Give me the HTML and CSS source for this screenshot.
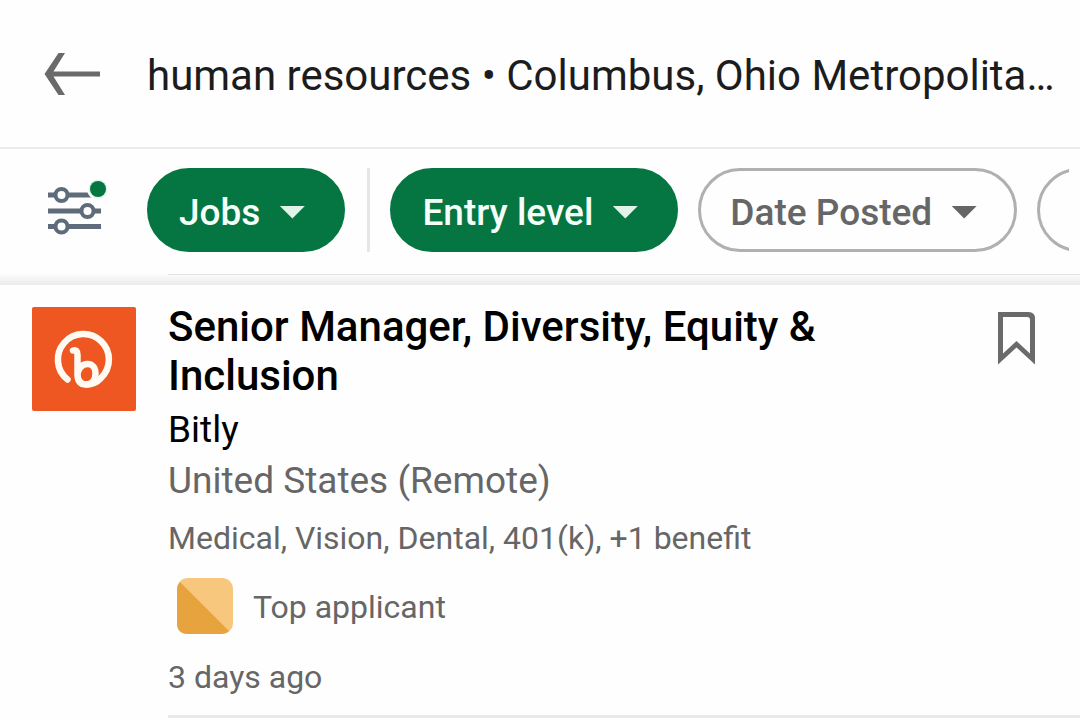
FILE: index.html
```html
<!DOCTYPE html>
<html lang="en">
<head>
<meta charset="utf-8">
<meta name="viewport" content="width=device-width, initial-scale=1">
<title>Job search</title>
<link rel="stylesheet" href="styles.css">
</head>
<body>
<header class="topbar">
  <button class="icon-button" type="button" aria-label="Back">
    <svg width="56" height="44" viewBox="0 0 56 44" fill="#6a6a6a"><path d="M14.500 1h6.500L9.500 19.500H56v5H9.500L21 43h-6.500L.5 22z"/></svg>
  </button>
  <input class="search" type="text" aria-label="Search" value="human resources • Columbus, Ohio Metropolitan Area">
</header>
<nav class="filters" aria-label="Filters">
  <button class="icon-button" type="button" aria-label="All filters">
    <svg width="60" height="62" viewBox="0 0 60 62" fill="none">
      <path d="M1 16h44M1 32h53M1 47.500h53" stroke="#5e6b7b" stroke-width="5"/>
      <g fill="#fefefe" stroke="#5e6b7b" stroke-width="4"><circle cx="14.500" cy="16" r="6"/><circle cx="40.500" cy="32" r="6"/><circle cx="14.500" cy="47.500" r="6"/></g>
      <circle cx="51" cy="10" r="11" fill="#fefefe"/>
      <circle cx="51" cy="10" r="9.500" fill="#dcf7e8"/>
      <circle cx="51" cy="10" r="8" fill="#057642"/>
    </svg>
  </button>
  <div class="chips">
    <button class="chip chip-on" type="button">Jobs<span class="caret"></span></button>
    <span class="divider"></span>
    <button class="chip chip-on" type="button">Entry level<span class="caret"></span></button>
    <button class="chip" type="button">Date Posted<span class="caret"></span></button>
    <button class="chip chip-next" type="button" aria-label="More filters"></button>
  </div>
</nav>
<div class="shade"></div>
<main>
  <article class="job">
    <svg class="logo" width="104" height="104" viewBox="0 0 104 104" role="img" aria-label="Bitly">
      <rect width="104" height="104" rx="2" fill="#ee5622"/>
      <g fill="none" stroke="#fffaf2" stroke-linecap="round" stroke-linejoin="round">
        <path d="M35.500 72.500A25.500 25.500 0 1 1 69 71Q63 77.500 54.500 77.500" stroke-width="6.500"/>
        <path d="M41 43.500Q45.500 42 45.500 48V67Q45.500 77.500 54 77.500C60 77.500 63.500 72.500 63.500 66C63.500 60.500 60 57 55.500 57C50 57 45.500 62 45.500 68" stroke-width="6.500"/>
      </g>
    </svg>
    <div class="details">
      <div class="heading">
        <div class="heading-text">
          <h2 class="title"><a href="#job">Senior Manager, Diversity, Equity &amp; Inclusion</a></h2>
          <p class="company">Bitly</p>
          <p class="place">United States (Remote)</p>
        </div>
        <button class="icon-button save" type="button" aria-label="Save job">
          <svg width="38" height="54" viewBox="0 0 38 54"><path fill="#6a6a6a" fill-rule="evenodd" d="M0 1h30.500q6.500 0 6.500 6.500V53.500L18.500 36.500 0 53.500zM5 6v36.500L18.500 30 32 42.500V9q0-3-3-3z"/></svg>
        </button>
      </div>
      <p class="meta benefits">Medical, Vision, Dental, 401(k), +1 benefit</p>
      <p class="meta badge">
        <svg width="56" height="56" viewBox="0 0 56 56"><rect width="56" height="56" rx="11" fill="#f8c77e"/><path d="M3 4L52 53Q49 56 45 56H11Q0 56 0 45V11Q0 7 3 4z" fill="#e7a33e"/></svg>
        <span class="badge-label">Top applicant</span>
      </p>
      <p class="meta age">3 days ago</p>
    </div>
  </article>
</main>
</body>
</html>
```
FILE: styles.css
```css
* { box-sizing: border-box; }
body {
  margin: 0;
  background: #fefefe;
  color: #000;
  font-family: Roboto, "Liberation Sans", sans-serif;
  overflow-x: hidden;
}
p, h2 { margin: 0; }
button { font: inherit; cursor: pointer; }
svg { display: block; flex: none; }
.icon-button { flex: none; padding: 0; border: 0; background: none; }
.topbar {
  display: flex;
  align-items: center;
  gap: 47px;
  height: 149px;
  padding: 2px 24px 2px 44px;
  border-bottom: 2px solid #ececec;
}
.search {
  flex: 1;
  min-width: 0;
  padding: 4px 0 0;
  border: 0;
  outline: 0;
  background: none;
  color: #1c1c1c;
  font: 400 42px/48px Roboto, "Liberation Sans", sans-serif;
  text-overflow: ellipsis;
}
.filters {
  display: flex;
  align-items: center;
  gap: 40px;
  padding: 19px 11px 22px 47px;
}
.chips {
  display: flex;
  flex: 1;
  min-width: 0;
  gap: 20px;
  overflow: hidden;
}
.chip {
  display: flex;
  flex: none;
  align-items: center;
  gap: 19px;
  height: 84px;
  padding: 4px 37px 0 29px;
  border: 3px solid #b0b0b0;
  border-radius: 42px;
  background: #fefefe;
  color: #666;
  font-size: 37px;
  font-weight: 500;
  white-space: nowrap;
}
.chip-on { border-color: #057642; background: #057642; color: #f5fff9; }
.chip-next { width: 240px; }
.caret {
  width: 26px;
  height: 13px;
  background: #666;
  clip-path: polygon(0 0, 100% 0, 50% 100%);
}
.chip-on .caret { background: #e1f3e8; }
.divider { flex: none; width: 3px; margin-left: 2px; background: #e6e6e6; }
.shade {
  height: 11px;
  background: linear-gradient(#fcfcfc, #ebebeb);
}
.shade::before {
  content: "";
  display: block;
  height: 1px;
  margin-left: 168px;
  background: #e2e2e2;
}
.job {
  display: flex;
  gap: 32px;
  padding: 17px 0 0 32px;
}
.logo { margin-top: 5px; }
.details { flex: 1; min-width: 0; border-bottom: 3px solid #e9e9e9; }
.heading {
  display: flex;
  align-items: flex-start;
  justify-content: space-between;
  gap: 40px;
  padding-right: 44px;
}
.heading-text { max-width: 720px; }
.save { padding-top: 9px; }
.title { font-size: 42px; font-weight: 500; line-height: 49px; }
.title a { color: inherit; text-decoration: none; }
.company, .place { font-size: 37px; line-height: 51px; }
.company { padding-top: 4px; }
.place, .meta { color: #666; }
.meta { font-size: 32px; line-height: 40px; }
.benefits { padding-top: 12px; }
.badge {
  display: flex;
  align-items: center;
  gap: 20px;
  padding: 20px 0 0 9px;
}
.badge-label { padding-top: 2px; }
.age { padding: 23px 0 18px; }
```
